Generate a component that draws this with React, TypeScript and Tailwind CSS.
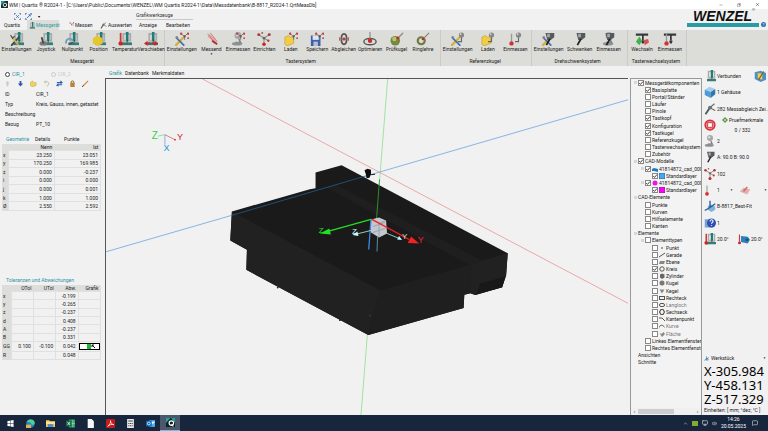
import type { ReactNode } from "react";
import { ChevronUp, Copy, MessageSquare, Minus, Monitor, Volume2, X } from "lucide-react";

/* ---------- icon parts, all drawn in a 16x16 box ---------- */

const parts: Record<string, ReactNode> = {
  machine: (
    <g>
      <rect x="5" y="9" width="10" height="5" fill="#b9bcbc" />
      <rect x="4" y="12" width="12" height="3" fill="#2d7f78" />
      <path d="M6 10V2h8v8" fill="none" stroke="#a9acab" strokeWidth="2" />
      <rect x="9" y="0" width="3" height="10" fill="#1f7f76" />
      <path d="M10.500 9v3" stroke="#333" strokeWidth="1" />
    </g>
  ),
  wrench: (
    <g strokeLinecap="round">
      <path d="M2 15l8-9" stroke="#3e444b" strokeWidth="2" />
      <path d="M2 6l7 8" stroke="#d8b43c" strokeWidth="2" />
      <path d="M1 4l2 3 2-2" fill="none" stroke="#50565c" strokeWidth="1.500" />
    </g>
  ),
  wrenchBlue: (
    <g strokeLinecap="round">
      <path d="M1 15l9-9" stroke="#d9b02f" strokeWidth="2.500" />
      <path d="M2 7l8 8" stroke="#466fb5" strokeWidth="2" />
      <circle cx="2" cy="6" r="1.500" fill="#85898e" />
    </g>
  ),
  stylus: (
    <g>
      <path d="M2 3l6 4 6-4M8 7v6M8 7l5 3" fill="none" stroke="#8b8585" strokeWidth="1.200" />
      <circle cx="2" cy="3" r="1.700" fill="#a63a3a" />
      <circle cx="14" cy="3" r="1.700" fill="#a63a3a" />
      <circle cx="8" cy="7" r="1.500" fill="#6b6565" />
      <circle cx="8" cy="14" r="2" fill="#c62828" />
      <circle cx="6" cy="1" r="1" fill="#b23b3b" />
      <circle cx="13" cy="10" r="1.300" fill="#c62828" />
    </g>
  ),
  miniStylus: (
    <g>
      <path d="M7 2l4 3 4-4M11 5v4" fill="none" stroke="#777" strokeWidth="1" />
      <circle cx="7" cy="2" r="1.300" fill="#c23b3b" />
      <circle cx="15" cy="2" r="1.300" fill="#c23b3b" />
      <circle cx="11" cy="5" r="1.200" fill="#555" />
      <circle cx="15" cy="7" r="1" fill="#c23b3b" />
    </g>
  ),
  folder: <path d="M1 6l4-2 2 2 4-1v8l-8 3-2-2z" fill="#f0cd45" stroke="#c79a22" strokeWidth=".7" />,
  disk: (
    <g>
      <path d="M1 4h11v12H1z" fill="#4260a8" />
      <rect x="3" y="4" width="7" height="5" fill="#dfe5f2" />
      <rect x="4" y="11" width="5" height="5" fill="#b6bfd4" />
    </g>
  ),
  ballTop: (
    <g>
      <path d="M12 5v6h-4" fill="none" stroke="#666" strokeWidth="1.300" />
      <circle cx="12" cy="3.500" r="3" fill="#85888b" />
      <circle cx="11" cy="2.500" r="1" fill="#d5d7d9" />
    </g>
  ),
  greenBall: (
    <g>
      <circle cx="6" cy="10" r="5.500" fill="#77893d" />
      <circle cx="5" cy="8" r="2.500" fill="#b8c473" />
      <path d="M8 8l7-7" stroke="#8d8181" strokeWidth="1.500" />
      <circle cx="9" cy="7" r="1.500" fill="#c62828" />
    </g>
  ),
  greenRing: (
    <g>
      <circle cx="6" cy="10" r="4" fill="none" stroke="#6c7d3c" strokeWidth="2.500" />
      <path d="M7 9l8-8" stroke="#8d8181" strokeWidth="1.500" />
      <circle cx="8" cy="8" r="1.500" fill="#c62828" />
    </g>
  ),
  ring: (
    <g>
      <ellipse cx="8" cy="8" rx="3" ry="6" fill="none" stroke="#5b5151" strokeWidth="2" />
      <path d="M3 8h10" stroke="#888" />
      <circle cx="8" cy="8" r="1.800" fill="#b23b3b" />
      <path d="M3 6v4M13 6v4" stroke="#b23b3b" />
    </g>
  ),
  optimize: (
    <g>
      <ellipse cx="8" cy="11" rx="7" ry="3.500" fill="none" stroke="#555" strokeWidth="1.600" />
      <path d="M8 0v9" stroke="#888" strokeWidth="1.300" />
      <circle cx="8" cy="10" r="2.500" fill="#cf2a2a" />
    </g>
  ),
  head: (
    <g>
      <path d="M4 1h10v5l-4 3H6z" fill="#55595d" />
      <path d="M6 2h3v4H6z" fill="#a4a8ab" />
      <path d="M9 8l-4 7" stroke="#222" strokeWidth="2" />
    </g>
  ),
  probe: (
    <g>
      <path d="M4 2v9" stroke="#999" strokeWidth="1.500" />
      <circle cx="4" cy="13" r="2.500" fill="#d43030" />
    </g>
  ),
  hand: (
    <g>
      <path d="M4 4l5 4 3 5" fill="none" stroke="#e5a8a4" strokeWidth="4" />
      <path d="M3 2l9 11M6 1l8 10" stroke="#c27474" strokeWidth="1" />
      <path d="M8 10l6 4" stroke="#b03030" strokeWidth="2" />
    </g>
  ),
  rack: (
    <g>
      <path d="M1 3h14" stroke="#34383b" strokeWidth="2.500" />
      <path d="M9 3v7" stroke="#34383b" strokeWidth="2" />
      <path d="M7 10h4l-1 3H8z" fill="#34383b" />
    </g>
  ),
  swap: (
    <g>
      <path d="M1 11l4-6 3 5-3 5z" fill="#46b04b" />
      <path d="M15 8l-5 1 1 6 5-3z" fill="#dd4e4e" />
    </g>
  ),
  joystick: (
    <g>
      <ellipse cx="5" cy="13" rx="4.500" ry="2.500" fill="#777b7e" />
      <path d="M5 13L3 6" stroke="#444" strokeWidth="2" />
    </g>
  ),
  zero: (
    <g>
      <path d="M1 13c0-6 6-7 8-3" fill="none" stroke="#6c9cc0" strokeWidth="2" />
      <path d="M4 14l5-2" stroke="#444" strokeWidth="1.500" />
    </g>
  ),
  position: <path d="M1 7l5-3 6 3v6l-5 3-6-3z" fill="#e6c52d" />,
  thermo: (
    <g>
      <path d="M3 1v10" stroke="#cf3535" strokeWidth="2" />
      <circle cx="3" cy="13" r="2.500" fill="#c62828" />
    </g>
  ),
  move: <path d="M0 13l4-3v2h3v2H4v2zM16 13l-4-3v2H9v2h3v2z" fill="#c62828" />,
  cube: (
    <g>
      <path d="M1 5l6-4 8 3-6 4z" fill="#9fd0f0" />
      <path d="M1 5l8 3v8l-8-4z" fill="#4e9bd3" />
      <path d="M9 8l6-4v7l-6 5z" fill="#2f76b0" />
    </g>
  ),
  calibrate: (
    <g>
      <path d="M2 15l6-9" stroke="#50565b" strokeWidth="2.500" />
      <path d="M8 6l6-5M9 7l6 3" stroke="#6d7175" strokeWidth="1.600" />
      <circle cx="8" cy="6" r="2.500" fill="#6d7175" />
    </g>
  ),
  stop: (
    <g>
      <circle cx="8" cy="8" r="7.500" fill="#d92c3a" />
      <circle cx="8" cy="8" r="5.500" fill="#f08a8f" />
      <rect x="5" y="5" width="6" height="6" fill="#fff" stroke="#c01f2c" />
    </g>
  ),
  refBall: (
    <g>
      <circle cx="8" cy="4" r="4" fill="#a5a8aa" />
      <circle cx="7" cy="3" r="1.500" fill="#e6e6e6" />
      <path d="M9 8l2 4H5" fill="none" stroke="#777" strokeWidth="1.600" />
      <ellipse cx="7" cy="13.500" rx="6" ry="2" fill="#8d9092" />
    </g>
  ),
  align: (
    <g>
      <path d="M5 8l5-2 5 3v4l-5 3-5-3z" fill="#7fb3d8" />
      <path d="M8 10V1M8 10l-7 4M8 10l7-5" stroke="#285d9b" strokeWidth="1.800" />
    </g>
  ),
  help: (
    <g>
      <rect x="1" y="3" width="11" height="11" fill="#7aa1d6" />
      <circle cx="10" cy="8" r="6" fill="#2d4fb4" />
      <path d="M8 6c0-3 4-3 4-.5 0 2-2 2-2 3.500M10 11v1" fill="none" stroke="#fff" strokeWidth="1.500" />
    </g>
  ),
  part: (
    <g>
      <path d="M4 4l9 1 3 4-3 5-9-2z" fill="#2f7fbd" />
      <circle cx="12" cy="9" r="2" fill="#155689" />
      <path d="M2 2v9" stroke="#cf3535" strokeWidth="1.500" />
      <circle cx="2" cy="13" r="2" fill="#c62828" />
    </g>
  ),
  plane: (
    <g>
      <path d="M1 10l5-5 9 2-4 7z" fill="#e5b0a9" />
      <path d="M6 10l5-6" stroke="#c2726c" strokeWidth="2" />
    </g>
  ),
  monitor: (
    <g>
      <path d="M1 3l8-2 7 3v9l-7 3-8-4z" fill="#4d8fc6" />
      <path d="M5 4l6 1v8l-6-2z" fill="#f1cf4a" />
      <path d="M13 2L6 13" stroke="#875a22" strokeWidth="1.500" />
    </g>
  ),
};

function Icon({ use, className = "size-3.5" }: { use: string[]; className?: string }) {
  return (
    <svg viewBox="0 0 16 16" className={`shrink-0 ${className}`} aria-hidden="true">
      {use.map((p) => (
        <g key={p}>{parts[p]}</g>
      ))}
    </svg>
  );
}

/* ---------- data ---------- */

type Tool = { label: string; icon: string[]; arrow?: boolean };
type Group = { title: string; grow: string; tools: Tool[] };

const groups: Group[] = [
  {
    title: "Messgerät",
    grow: "flex-[168]",
    tools: [
      { label: "Einstellungen", icon: ["machine", "wrench"] },
      { label: "Joystick", icon: ["machine", "joystick"] },
      { label: "Nullpunkt", icon: ["machine", "zero"] },
      { label: "Position", icon: ["machine", "position"] },
      { label: "Temperatur", icon: ["machine", "thermo"] },
      { label: "Verschieben", icon: ["machine", "move"] },
    ],
  },
  {
    title: "Tastersystem",
    grow: "flex-[277] pr-1",
    tools: [
      { label: "Einstellungen", icon: ["wrenchBlue", "miniStylus"] },
      { label: "Messend", icon: ["hand"], arrow: true },
      { label: "Einmessen", icon: ["refBall", "miniStylus"] },
      { label: "Einrichten", icon: ["stylus"] },
      { label: "Laden", icon: ["folder", "miniStylus"] },
      { label: "Speichern", icon: ["disk", "miniStylus"] },
      { label: "Abgleichen", icon: ["ring"] },
      { label: "Optimieren", icon: ["optimize"] },
      { label: "Prüfkugel", icon: ["greenBall"] },
      { label: "Ringlehre", icon: ["greenRing"] },
    ],
  },
  {
    title: "Referenzkugel",
    grow: "flex-[90] pr-0.5",
    tools: [
      { label: "Einstellungen", icon: ["wrenchBlue", "ballTop"] },
      { label: "Laden", icon: ["folder", "ballTop"] },
      { label: "Einmessen", icon: ["probe", "ballTop"] },
    ],
  },
  {
    title: "Drehschwenksystem",
    grow: "flex-[93] pr-1",
    tools: [
      { label: "Einstellungen", icon: ["wrenchBlue", "head"] },
      { label: "Schwenken", icon: ["head"] },
      { label: "Einmessen", icon: ["refBall", "head"] },
    ],
  },
  {
    title: "Tasterwechselsystem",
    grow: "flex-[57] pr-0.5",
    tools: [
      { label: "Wechseln", icon: ["rack", "swap"] },
      { label: "Einmessen", icon: ["rack", "probe"] },
    ],
  },
];

const geometry = [
  ["x", "23.250", "23.051"],
  ["y", "170.250", "169.985"],
  ["z", "0.000", "-0.237"],
  ["i", "0.000", "0.000"],
  ["j", "0.000", "0.001"],
  ["k", "1.000", "1.000"],
  ["Ø", "2.550", "2.592"],
];

const tolerances = [
  ["x", "", "", "-0.199"],
  ["y", "", "", "-0.265"],
  ["z", "", "", "-0.237"],
  ["d", "", "", "0.408"],
  ["A", "", "", "-0.237"],
  ["B", "", "", "0.331"],
  ["GG", "0.100", "-0.100", "0.042"],
  ["R", "", "", "0.048"],
];

type Node = { label: string; level: 0 | 1 | 2; check?: boolean; box?: false; open?: boolean; icon?: ReactNode; dim?: boolean };

const line = { fill: "none", stroke: "#555", strokeWidth: 1 };
const tree: Node[] = [
  { label: "Messgerätkomponenten", level: 0, check: true, open: true },
  { label: "Basisplatte", level: 1, check: true },
  { label: "Portal/Ständer", level: 1 },
  { label: "Läufer", level: 1 },
  { label: "Pinole", level: 1 },
  { label: "Tastkopf", level: 1, check: true },
  { label: "Konfiguration", level: 1, check: true },
  { label: "Tastkugel", level: 1, check: true },
  { label: "Referenzkugel", level: 1 },
  { label: "Tasterwechselsystem", level: 1 },
  { label: "Zubehör", level: 1 },
  { label: "CAD-Modelle", level: 0, check: true, open: true },
  { label: "41814872_cad_000_", level: 1, check: true, open: true, icon: <path d="M0 3l2-1 4 1v3L2 5 0 5z" fill="#1f78c0" /> },
  { label: "Standardlayer", level: 2, check: true, icon: <rect width="6" height="6" fill="#42a5f5" stroke="#444" strokeWidth=".6" /> },
  { label: "41814872_cad_000_", level: 1, check: true, open: true, icon: <circle cx="3" cy="3" r="2.500" fill="#e815e8" /> },
  { label: "Standardlayer", level: 2, check: true, icon: <rect width="6" height="6" fill="#ff00ff" stroke="#444" strokeWidth=".6" /> },
  { label: "CAD-Elemente", level: 0, box: false, open: true },
  { label: "Punkte", level: 1 },
  { label: "Kurven", level: 1 },
  { label: "Hilfselemente", level: 1 },
  { label: "Kanten", level: 1 },
  { label: "Elemente", level: 0, box: false, open: true },
  { label: "Elementtypen", level: 1, open: true },
  { label: "Punkt", level: 2, icon: <circle cx="3" cy="3" r=".8" fill="#333" /> },
  { label: "Gerade", level: 2, icon: <path d="M0 5l6-4" {...line} /> },
  { label: "Ebene", level: 2, icon: <path d="M0 5l1-3h5L5 5z" fill="#888" /> },
  { label: "Kreis", level: 2, check: true, icon: <circle cx="3" cy="3" r="2.200" {...line} /> },
  { label: "Zylinder", level: 2, icon: <path d="M1 1.500l2-1 2.500 1v3L3 6 1 4.500z" fill="#666" /> },
  { label: "Kugel", level: 2, icon: <circle cx="3" cy="3" r="2.500" fill="#777" /> },
  { label: "Kegel", level: 2, icon: <path d="M.5 1.500h5L3 5.500z" fill="#888" /> },
  { label: "Rechteck", level: 2, icon: <rect x=".5" y="1.500" width="5" height="3" {...line} /> },
  { label: "Langloch", level: 2, dim: true, icon: <rect x=".5" y="1.500" width="5" height="3" rx="1.500" {...line} /> },
  { label: "Sechseck", level: 2, icon: <path d="M2 .5h2L5.500 3 4 5.500H2L.5 3z" {...line} strokeWidth="1.200" /> },
  { label: "Kantenpunkt", level: 2, icon: <path d="M0 2h3l3 3" {...line} /> },
  { label: "Kurve", level: 2, dim: true, icon: <path d="M0 4.500c2-4 4-2 6 0" {...line} /> },
  { label: "Fläche", level: 2, dim: true, icon: <path d="M.5 2l2 1 2-2 1.500 2-3 3z" fill="#888" /> },
  { label: "Linkes Elementfenster", level: 1 },
  { label: "Rechtes Elementfenste", level: 1 },
  { label: "Ansichten", level: 0, box: false },
  { label: "Schnitte", level: 0, box: false },
];

const indent = ["pl-[3px]", "pl-2.5", "pl-[17px]"];

/* ---------- pieces ---------- */

function TitleBar() {
  return (
    <div className="flex h-[9px] items-center bg-white pl-px pr-2">
      <svg viewBox="0 0 16 16" className="size-[7px]" aria-hidden="true">
        <rect width="16" height="16" fill="#12302f" />
        <path d="M0 0h9L0 9z" fill="#1fa39a" />
        <circle cx="9" cy="9" r="4" fill="none" stroke="#fff" strokeWidth="2" />
      </svg>
      <h1 className="ml-px flex-1 truncate text-[5px] leading-[8px]">
        WM | Quartis ® R2024-1 - [C:\Users\Public\Documents\WENZEL\WM Quartis R2024-1\Data\Messdatenbank\B-8817_R2024-1.QrtMeasDb]
      </h1>
      <div className="flex gap-3.5">
        <button aria-label="Minimieren"><Minus className="size-1" /></button>
        <button aria-label="Wiederherstellen"><Copy className="size-1 -scale-x-100" /></button>
        <button aria-label="Schließen"><X className="size-[5px]" /></button>
      </div>
    </div>
  );
}

function Brand() {
  return (
    <div className="flex items-end gap-0.5 self-start pr-0.5">
      <div className="w-[72px] border-b-4 border-[#2a9ba3] pl-1.5 font-['Liberation_Sans',sans-serif] text-sm font-bold italic leading-[14px] text-[#111]">
        WENZEL<sup className="align-top text-[4px] font-normal not-italic leading-[6px]">®</sup>
      </div>
      <button aria-label="Hilfe" className="grid size-[5px] place-items-center rounded-full bg-[#2f6fb0] text-[4px] leading-none text-white">?</button>
    </div>
  );
}

function RibbonHead() {
  const sel = "M1 4V1h3M12 1h3v3M15 12v3h-3M4 15H1v-3";
  return (
    <div className="flex h-[21px] justify-between bg-[#f1f1f1]">
      <div className="flex flex-col">
        <div className="flex h-[11px] items-end gap-1 pl-3.5 text-[#3b6fae]">
          {["M5 5l6 6M11 5l-6 6", "M4 12l8-8M8 4h4v4"].map((d) => (
            <svg key={d} viewBox="0 0 16 16" className="size-[7px]" aria-hidden="true">
              <path d={`${sel}${d}`} fill="none" stroke="currentColor" strokeWidth="2" />
            </svg>
          ))}
          <span className="ml-0.5 text-[4px] leading-[6px] text-black">▾</span>
          <span className="ml-[92px] border-b border-[#c8c8c8] pr-5 text-[5px] leading-[8px] text-[#333]">Grafikwerkzeuge</span>
        </div>
        <nav className="flex h-[10px] items-center text-[5px] leading-[8px]">
          <a href="#quartis" className="w-[27px] pl-1">Quartis</a>
          <a href="#messgeraet" className="flex h-full w-8 items-center gap-px bg-[#dcdcd8] px-px text-[#2e9ba5]">
            <Icon use={["machine"]} className="size-[7px]" />
            Messgerät
          </a>
          <a href="#messen" className="ml-2 flex w-[33px] items-center gap-px">
            <Icon use={["miniStylus"]} className="size-[7px]" />
            Messen
          </a>
          <a href="#auswerten" className="flex w-[39px] items-center gap-px">
            <Icon use={["calibrate"]} className="size-[7px]" />
            Auswerten
          </a>
          <a href="#anzeige" className="w-[27px]">Anzeige</a>
          <a href="#bearbeiten">Bearbeiten</a>
        </nav>
      </div>
      <Brand />
    </div>
  );
}

function Ribbon() {
  return (
    <div className="flex h-9 bg-[#dcdcd8] text-[5px] leading-[6px]">
      {groups.map((g) => (
        <section key={g.title} className={`${g.grow} flex min-w-0 basis-0 flex-col border-r border-[#cacac6]`}>
          <div className="flex flex-1 pt-0.5">
            {g.tools.map((t) => (
              <button
                key={t.label}
                className={`flex min-w-0 flex-col items-center whitespace-nowrap ${t.label === "Einstellungen" ? "w-[33px] shrink-0" : "flex-1 basis-0"}`}
              >
                <Icon use={t.icon} />
                <span>{t.label}</span>
                {t.arrow && <span className="text-[3px] leading-[4px]">▼</span>}
              </button>
            ))}
          </div>
          <h2 className="h-2 text-center">{g.title}</h2>
        </section>
      ))}
      <div className="flex-[83]" />
    </div>
  );
}

const tools: { name: string; art: ReactNode }[] = [
  { name: "Vorheriges", art: <path d="M4 1l2.500 3H5v3H3V4H1.500z" fill="#c9c9c9" /> },
  { name: "Nächstes", art: <path d="M4 7.500L1 4h2V1h2v3h2z" fill="#2458a8" /> },
  { name: "Öffnen", art: <path d="M0 3l3-2 1 2h3v3L3 8 0 6z" fill="#ead564" stroke="#b99a22" strokeWidth=".5" /> },
  { name: "Rückgängig", art: <path d="M2 2h3c3 1 1 5-1 5M3 1L1.500 2 3 4" fill="none" stroke="#b9b79c" /> },
  { name: "Aktualisieren", art: <path d="M1 3h5M5 1l2 2-2 1M7 5.500H2M3 4.500L1 6l2 1" fill="none" stroke="#2861b4" strokeWidth="1.200" /> },
  { name: "Sperren", art: <g><path d="M2.500 4V2.500a1.500 1.500 0 013 0V4" fill="none" stroke="#7d5a2e" /><rect x="1.500" y="3" width="5" height="5" fill="#b98335" /></g> },
  { name: "Bearbeiten", art: <g><path d="M1 7l6-6" stroke="#cf8a3a" strokeWidth="1.500" /><path d="M0 8l2-2" stroke="#444" /></g> },
];

function FeaturePanel() {
  const info = [
    ["ID", "CIR_1"],
    ["Typ", "Kreis, Gauss, innen, getastet"],
    ["Beschreibung", ""],
    ["Bezug", "PT_10"],
  ];
  const cell = "border border-[#e0e0e0] p-0 pr-0.5 text-right";
  return (
    <aside className="flex w-[105px] shrink-0 flex-col pl-0.5 text-[5px] leading-[6px]">
      <div className="flex h-[11px] items-end gap-[26px] pl-[3px]">
        <label className="flex items-center gap-0.5 text-[#3191a6]">
          <input type="radio" name="feature" defaultChecked className="size-[5px] appearance-none rounded-full border border-[#444] bg-white" />
          CIR_1
        </label>
        <label className="flex items-center gap-0.5 text-[#c9c9c9]">
          <input type="radio" name="feature" className="size-[5px] appearance-none rounded-full border border-[#c9c9c9]" />
          CIR_2
        </label>
      </div>
      <div className="flex h-3 items-center gap-1.5 pl-0.5">
        {tools.map((t) => (
          <button key={t.name} aria-label={t.name} className="shrink-0">
            <svg viewBox="0 0 8 8" className="size-[7px]">{t.art}</svg>
          </button>
        ))}
      </div>
      <dl className="grid grid-cols-[31px_1fr] pl-[3px]">
        {info.map(([k, v]) => (
          <div key={k} className="col-span-2 grid h-2.5 grid-cols-subgrid items-center whitespace-nowrap">
            <dt>{k}</dt>
            <dd>{v}</dd>
          </div>
        ))}
      </dl>
      <div className="mt-[5px] flex h-2.5 items-center pl-1">
        <button className="w-[29px] text-left text-[#3191a6]">Geometrie</button>
        <button className="w-[29px] text-left">Details</button>
        <button>Punkte</button>
      </div>
      <table className="h-[67px] w-[99px] table-fixed border-collapse">
        <thead>
          <tr className="bg-[#dddddb]">
            <th className="w-1.5 p-0" />
            <th className="p-0 pr-0.5 text-right font-normal">Nenn</th>
            <th className="p-0 pr-0.5 text-right font-normal">Ist</th>
          </tr>
        </thead>
        <tbody>
          {geometry.map(([n, a, b]) => (
            <tr key={n}>
              <th className="bg-[#dddddb] p-0 pl-px text-left font-normal">{n}</th>
              <td className={cell}>{a}</td>
              <td className={cell}>{b}</td>
            </tr>
          ))}
        </tbody>
      </table>
      <h3 className="mt-[66px] pb-0.5 pl-1 text-[#3191a6]">Toleranzen und Abweichungen</h3>
      <table className="h-[75px] w-[99px] table-fixed border-collapse">
        <thead>
          <tr className="bg-[#dddddb]">
            <th className="w-[9px] p-0" />
            {["OTol", "UTol", "Abw.", "Grafik"].map((h) => (
              <th key={h} className="p-0 pr-0.5 text-right font-normal">{h}</th>
            ))}
          </tr>
        </thead>
        <tbody>
          {tolerances.map(([n, o, u, d]) => (
            <tr key={n}>
              <th className="bg-[#dddddb] p-0 pl-px text-left font-normal">{n}</th>
              <td className={cell}>{o}</td>
              <td className={cell}>{u}</td>
              <td className={cell}>{d}</td>
              <td className="border border-[#e0e0e0] p-0">
                {n === "GG" && (
                  <div className="flex h-[7px] justify-center border border-black bg-white">
                    <span className="ml-1 w-1 bg-[#19b83a]" />
                    <svg viewBox="0 0 5 5" className="size-[5px]"><path d="M1 1l3 3M1 1h2M1 1v2" stroke="#111" /></svg>
                  </div>
                )}
              </td>
            </tr>
          ))}
        </tbody>
      </table>
    </aside>
  );
}

function Viewport() {
  return (
    <svg viewBox="106 79 522 335" preserveAspectRatio="xMidYMid slice" className="block min-h-0 w-full flex-1 bg-[#f1f1f1]" aria-label="Grafik">
      <g fill="none" strokeWidth=".7">
        <path d="M203 79L628 303" stroke="#e58a8a" />
        <path d="M387.600 79L361 414" stroke="#7fdc7f" />
      </g>
      {/* base plate with the raised rail behind it */}
      <path d="M232.300 211L310 189l5.700-1V172.300l26-7.300 165.600 87.700-1.600 22-4 12-26.700 7.600-5-1.600-6 1.300-.7 13.300-95 27-121.600-65 .6-20-16.600-9.300z" fill="#1a1a1a" />
      <path d="M232.300 211L380 289.500l-11.700 44.800-121.600-65 .6-20-16.600-9.300z" fill="#212121" />
      <path d="M380 289.500l90-25.500v28.700l-6 1.300-.7 13.300-95 27z" fill="#1f1f1f" />
      <path d="M470 264l11.700-4 25.600-7.300-1.600 22-4 12-26.700 7.600-5-1.600z" fill="#212121" />
      <path d="M480 283l25-7-3.300 10.700-25.700 7z" fill="#181818" />
      <path d="M326 187l9-3 146.700 76-11.700 5z" fill="#1f1f1f" />
      <circle cx="278" cy="287" r=".9" fill="#222" />
      <circle cx="340" cy="319.500" r=".9" fill="#222" />
      <circle cx="370" cy="315" r=".5" fill="#777" />
      <path d="M106 251.500L232 215" stroke="#6ca6df" strokeWidth=".8" fill="none" />
      <path d="M232 215L368 175" stroke="#235c8c" strokeWidth=".8" fill="none" />
      <path d="M366 175.700L628 99.500" stroke="#6ca6df" strokeWidth=".8" fill="none" />
      <path d="M379.500 179L376.500 219" stroke="#2f9a2f" strokeWidth=".9" />
      {/* probe head */}
      <path d="M364.500 170l3-1.500 3.500 1v4l-1.500 4-3 .5-.5-3.500z" fill="#0d0d0d" />
      <path d="M370 174.500l5-.5" stroke="#222" strokeWidth="1" />
      {/* measured part */}
      <path d="M371 219l8-2 7 3 1 13-8 4-8-5z" fill="#c3c8ce" />
      <path d="M371 219l8 4v14M373 226l12-4M373 232l12-4M379 223l7-3" stroke="#8d949c" strokeWidth=".7" fill="none" />
      <path d="M371 219L368.700 249" stroke="#3c8ae0" strokeWidth="1.300" />
      <path d="M377.500 236L377 251" stroke="#5fb0c4" strokeWidth=".8" />
      {/* part coordinate system */}
      <path d="M371 219l-43 12" stroke="#22e022" strokeWidth="1.300" />
      <path d="M320 233l9.500-5 1.500 6z" fill="#22e022" />
      <path d="M372 219l37 20" stroke="#f02222" strokeWidth="1.300" />
      <path d="M419 243l-11.500-.5 3.500-6.500z" fill="#f02222" />
      <path d="M371 230l-14 3.500M387 233l11 4.500" stroke="#b4f2f0" strokeWidth=".8" />
      <path d="M352.500 234.500l5-3.500 1 4.500zM402 239.500l-5-.5 2-3.500z" fill="#c9fbfa" />
      <g fontFamily="Liberation Sans, sans-serif" fontSize="9">
        <text x="319" y="232.500" fill="#22e022" fontSize="8">Z</text>
        <text x="352" y="234" fill="#c9fbfa" fontSize="8">Z</text>
        <text x="402" y="239" fill="#d8dede" fontSize="8">Y</text>
        <text x="417.500" y="243" fill="#f02222">Y</text>
        <text x="152.500" y="138.500" fill="#35cf46" fontSize="10">Z</text>
        <text x="177.500" y="140" fill="#cf2337" fontSize="9">Y</text>
        <text x="164" y="150.500" fill="#2492d6" fontSize="9">X</text>
      </g>
      <path d="M165.500 134.500l-7 1.500" stroke="#7fdc7f" strokeWidth=".8" />
      <path d="M165.500 134.500l9 4.500" stroke="#c26b6b" strokeWidth=".8" />
      <path d="M165.500 134.500v10" stroke="#6ca6df" strokeWidth=".8" />
      <circle cx="175.500" cy="139.500" r=".9" fill="#cf2337" />
    </svg>
  );
}

function GraphicsArea() {
  return (
    <main className="flex min-w-0 flex-1 flex-col">
      <nav className="flex h-3 items-center gap-1 pl-1 pt-0.5 text-[5px] leading-[6px]">
        <a href="#grafik" className="w-3 text-[#3191a6]">Grafik</a>
        <a href="#datenbank" className="w-[23px]">Datenbank</a>
        <a href="#merkmaldaten">Merkmaldaten</a>
      </nav>
      <div className="flex min-h-0 flex-1 flex-col border-l border-t border-[#555]">
        <Viewport />
      </div>
    </main>
  );
}

function TreeRow({ node }: { node: Node }) {
  return (
    <li className={`flex min-h-0 flex-1 items-center whitespace-nowrap ${indent[node.level]}`}>
      <span className="mr-px grid w-[3px] shrink-0 place-items-center">
        {node.open && (
          <svg viewBox="0 0 4 4" className="size-[3px]"><path d="M.5.5h3v3h-3zM1 2h2" fill="#fff" stroke="#999" strokeWidth=".5" /></svg>
        )}
      </span>
      <label className={`flex items-center gap-px ${node.dim ? "text-[#777]" : ""}`}>
        {node.box !== false && (
          <span className="grid size-[6px] shrink-0 place-items-center">
            <input type="checkbox" defaultChecked={node.check} className="peer col-start-1 row-start-1 size-[6px] appearance-none border border-[#888] bg-white" />
            <svg viewBox="0 0 6 6" className="pointer-events-none col-start-1 row-start-1 hidden size-[6px] peer-checked:block">
              <path d="M1.200 3l1.300 1.400L5 1.500" fill="none" stroke="#111" strokeWidth=".8" />
            </svg>
          </span>
        )}
        {node.icon && <svg viewBox="0 0 6 6" className="size-1.5 shrink-0">{node.icon}</svg>}
        {node.label}
      </label>
    </li>
  );
}

function TreePanel() {
  return (
    <aside className="ml-0.5 mt-3 flex w-[72px] shrink-0 flex-col overflow-hidden border-x border-t border-[#999] bg-[#f3f3f3] text-[5px] leading-[6px]">
      <ul className="flex h-[287px] flex-col">
        {tree.map((n, i) => (
          <TreeRow key={i} node={n} />
        ))}
      </ul>
      <div className="mt-auto flex h-[7px] items-center justify-between bg-[#f0f0f0] text-[5px] leading-none">
        <button className="w-[7px]" aria-label="Nach links">‹</button>
        <div className="mr-auto h-[5px] w-9 bg-[#cdcdcd]" />
        <button className="w-[7px]" aria-label="Nach rechts">›</button>
      </div>
    </aside>
  );
}

function StatusRow({ icon, children }: { icon: string[]; children: ReactNode }) {
  return (
    <div className="flex min-h-0 flex-1 items-center gap-px whitespace-nowrap">
      <Icon use={icon} className="size-3" />
      {children}
    </div>
  );
}

function StatusPanel() {
  return (
    <aside className="flex w-[66px] shrink-0 flex-col pl-0.5 text-[5px] leading-[6px]">
      <div className="flex h-[181px] flex-col pt-0.5">
        <StatusRow icon={["machine"]}>
          <span className="flex-1">Verbunden</span>
          <Icon use={["monitor"]} className="mr-0.5 size-3" />
        </StatusRow>
        <StatusRow icon={["cube"]}>1 Gehäuse</StatusRow>
        <StatusRow icon={["calibrate"]}>282 Messabgleich Zei...</StatusRow>
        <StatusRow icon={["stop"]}>
          <div className="flex flex-1 flex-col items-center gap-1">
            <span className="flex items-center gap-px">
              <svg viewBox="0 0 6 6" className="size-[6px]"><path d="M3 0l3 3-3 3-3-3z" fill="#5d9a48" /><path d="M2 3h2" stroke="#fff" /></svg>
              Pruefmerkmale
            </span>
            <span>0 / 332</span>
          </div>
        </StatusRow>
        <StatusRow icon={["refBall"]}>2</StatusRow>
        <StatusRow icon={["head"]}>A: 90.0 B: 90.0</StatusRow>
        <StatusRow icon={["stylus"]}>102</StatusRow>
        <StatusRow icon={["probe"]}>
          <span className="w-3">1</span>
          <span className="w-2 text-[3px]">▼</span>
          <Icon use={["plane"]} className="size-3" />
          <span className="ml-auto pr-px text-[3px]">▼</span>
        </StatusRow>
        <StatusRow icon={["align"]}>B-8817_Best-Fit</StatusRow>
        <StatusRow icon={["help"]}>1</StatusRow>
        <StatusRow icon={["machine", "thermo"]}>
          <span className="w-5">20.0°</span>
          <Icon use={["part"]} className="size-3" />
          <span>20.0°</span>
        </StatusRow>
      </div>
      <div className="mt-auto">
        <div className="flex items-center gap-0.5 pr-0.5">
          <Icon use={["align"]} className="size-[5px]" />
          <span className="flex-1">Werkstück</span>
          <span className="text-[3px]">▼</span>
        </div>
        <div className="whitespace-nowrap pt-[3px] font-['Noto_Sans',sans-serif] text-[13px] leading-[14px] text-black">
          <p>X-305.984</p>
          <p>Y-458.131</p>
          <p>Z-517.329</p>
        </div>
        <p className="pb-px leading-[8px]">Einheiten: [ mm; °dez; °C ]</p>
      </div>
    </aside>
  );
}

const apps: { name: string; art: ReactNode }[] = [
  { name: "Start", art: <path d="M1 2.500l6-1V8H1zM8 1.300L15 0v8H8zM1 9h6v5.500l-6-1zM8 9h7v7l-7-1.300z" fill="#fff" /> },
  { name: "Edge", art: <g><circle cx="8" cy="8" r="7.500" fill="#1b84d6" /><path d="M1 6c2-7 14-7 14.500 1 0 4-6 4-6 2C9 6 4 4 1 6z" fill="#54cf8b" /><rect x="0" y="10" width="9" height="6" fill="#e7ae4c" /></g> },
  { name: "Explorer", art: <g><path d="M0 2h6l1 2h9v10H0z" fill="#f4cf58" /><path d="M3 9h10v5H3z" fill="#4b89c8" /><path d="M0 5h16v4H0z" fill="#fbe49a" /></g> },
  { name: "Excel", art: <g><rect x="5" y="1" width="11" height="14" fill="#2fa46b" /><rect y="3" width="10" height="10" fill="#147143" /><path d="M3 5.500l4 5M7 5.500l-4 5" stroke="#fff" strokeWidth="1.400" /><path d="M12 1v14M10 8h6" stroke="#cfeedd" strokeWidth=".8" /></g> },
  { name: "Dokument", art: <path d="M3 0h7l4 4v12H3z" fill="#f6f6f6" /> },
  { name: "Acrobat", art: <g><rect width="16" height="16" rx="2" fill="#c8191b" /><path d="M3 13c3-2 6-7 5-10 0 4 3 7 6 7-4-1-8 0-11 3z" fill="none" stroke="#fff" strokeWidth="1.300" /></g> },
  { name: "Rechner", art: <g><rect x="2" width="12" height="16" fill="#e9e9e9" /><path d="M4 2.500h8v2H4zM4 7h2v2H4zM7 7h2v2H7zM10 7h2v2h-2zM4 11h2v2H4zM7 11h2v2H7zM10 11h2v2h-2z" fill="#444" /></g> },
  { name: "Outlook", art: <g><rect x="6" y="2" width="10" height="12" fill="#4fb0ec" /><path d="M8 5h8l-4 4z" fill="#fff" /><rect y="3" width="10" height="10" fill="#0a64b8" /><circle cx="5" cy="8" r="2.500" fill="none" stroke="#fff" strokeWidth="1.400" /></g> },
  { name: "Quartis", art: <g><rect width="16" height="16" fill="#10201f" /><path d="M0 0h8L0 9zM16 0v9l-7-9z" fill="#1fa39a" /><circle cx="9.500" cy="9" r="4" fill="none" stroke="#fff" strokeWidth="2" /><path d="M10 11l3 4" stroke="#fff" strokeWidth="2" /></g> },
];

function Taskbar() {
  return (
    <footer className="flex h-4 shrink-0 items-center justify-between bg-[#17263d] text-white">
      <div className="flex h-full">
        {apps.map((a) => (
          <button key={a.name} aria-label={a.name} className={`grid w-5 place-items-center ${a.name === "Quartis" ? "border-b border-[#7fb8e8] bg-[#4b586b]" : ""}`}>
            <svg viewBox="0 0 16 16" className={a.name === "Start" ? "size-[7px]" : "size-[9px]"}>{a.art}</svg>
          </button>
        ))}
      </div>
      <div className="flex items-center gap-1 pr-2.5">
        <ChevronUp className="size-[5px]" />
        <span className="h-[5px] w-1.5 bg-[#7fae2f]" />
        <Monitor className="size-1.5" />
        <Volume2 className="size-[5px]" />
        <div className="text-center text-[5px] leading-[7px]">
          <p>14:26</p>
          <p>20.05.2025</p>
        </div>
        <MessageSquare className="ml-0.5 size-1.5" />
      </div>
    </footer>
  );
}

export default function App() {
  return (
    <div className="flex h-screen flex-col overflow-hidden bg-[#f1f1f1] font-[Roboto,'Noto_Sans',sans-serif] text-[#222]">
      <TitleBar />
      <RibbonHead />
      <Ribbon />
      <div className="flex min-h-0 flex-1">
        <FeaturePanel />
        <GraphicsArea />
        <TreePanel />
        <StatusPanel />
      </div>
      <Taskbar />
    </div>
  );
}
